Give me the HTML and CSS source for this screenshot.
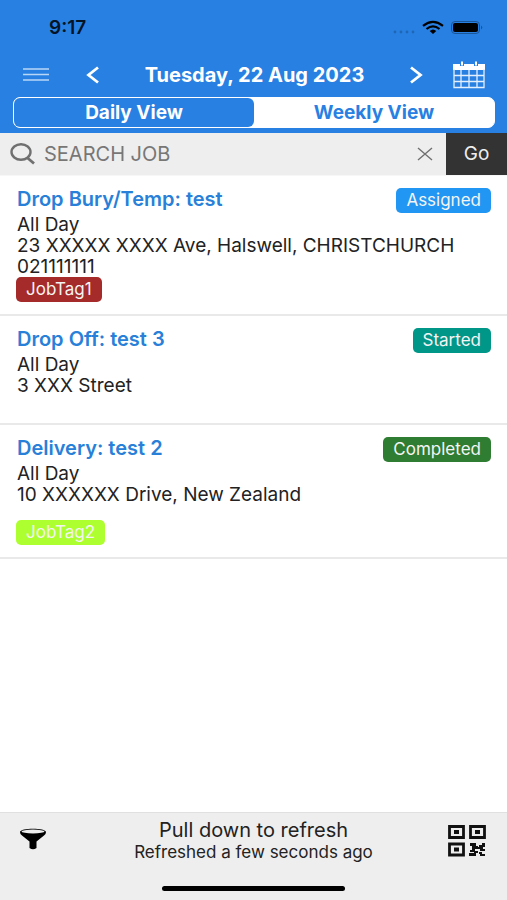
FILE: index.html
```html
<!DOCTYPE html>
<html lang="en">
<head>
<meta charset="utf-8">
<meta name="viewport" content="width=device-width, initial-scale=1">
<title>Jobs</title>
<link rel="stylesheet" href="styles.css">
</head>
<body>
<header class="header">
  <div class="status-bar">
    <span>9:17</span>
    <svg class="status-icons" width="92" height="16" viewBox="0 0 92 16" aria-hidden="true">
      <g fill="#1f66b6"><circle cx="4" cy="12" r="1.400"/><circle cx="10" cy="12" r="1.400"/><circle cx="16" cy="12" r="1.400"/><circle cx="22" cy="12" r="1.400"/></g>
      <g fill="none" stroke="#000" stroke-width="2.200"><path d="M32 5.800Q42-2.200 52 5.800"/><path d="M35.500 9Q42 3.600 48.500 9"/></g>
      <path d="M38.700 11Q42 8 45.300 11L42 14Z"/>
      <rect x="60.500" y="1.500" width="28" height="12" rx="3.500" fill="none" stroke="#1a5598"/>
      <rect x="62" y="3" width="25" height="9" rx="2"/>
      <path d="M90 5.500Q92.500 7.500 90 9.500Z" fill="#1a5598"/>
    </svg>
  </div>
  <nav class="date-bar">
    <button class="icon-button" aria-label="Menu"><svg width="26" height="16" viewBox="0 0 26 16"><path d="M0 2h26M0 7.500h26M0 13h26" stroke="#b9d6f7" stroke-width="1.600"/></svg></button>
    <button class="icon-button previous" aria-label="Previous day"><svg width="14" height="18" viewBox="0 0 14 18"><path d="M12 1.500L2.500 9L12 16.500" fill="none" stroke="#fff" stroke-width="2.800"/></svg></button>
    <h1 class="date">Tuesday, 22 Aug 2023</h1>
    <button class="icon-button next" aria-label="Next day"><svg width="14" height="18" viewBox="0 0 14 18"><path d="M2 1.500L11.500 9L2 16.500" fill="none" stroke="#fff" stroke-width="2.800"/></svg></button>
    <button class="icon-button" aria-label="Calendar"><svg width="32" height="28" viewBox="0 0 32 28"><path d="M0 3h32v6H0z" fill="#fff"/><path d="M1 8v18.500h30V8M8 9v17M16 9v17M24 9v17M1 14.500h30M1 20.500h30" fill="none" stroke="#e4effc" stroke-width="1.300"/><path d="M9 2v3M23 2v3" stroke="#2880e2" stroke-width="4"/><path d="M9 .5v4M23 .5v4" stroke="#fff" stroke-width="2"/></svg></button>
  </nav>
  <div class="tabs">
    <button class="tab selected">Daily View</button>
    <button class="tab">Weekly View</button>
  </div>
</header>
<form class="search">
  <label class="search-label" for="search"><svg width="26" height="22" viewBox="0 0 26 22" aria-hidden="true"><ellipse cx="11" cy="9" rx="9.500" ry="7.800" fill="none" stroke="#707070" stroke-width="2.400"/><path d="M17 14.500L24 20.500" stroke="#707070" stroke-width="2.800"/></svg></label>
  <input class="search-input" id="search" type="text" placeholder="SEARCH JOB" aria-label="Search job">
  <button class="clear" type="reset" aria-label="Clear"><svg width="16" height="14" viewBox="0 0 16 14"><path d="M1 1l14 12M15 1L1 13" stroke="#707070" stroke-width="1.400"/></svg></button>
  <button class="go" type="button">Go</button>
</form>
<main class="jobs">
  <article class="job">
    <div class="job-heading"><h2 class="job-title"><a href="#job1">Drop Bury/Temp: test</a></h2><span class="badge assigned">Assigned</span></div>
    <p>All Day</p>
    <p>23 XXXXX XXXX Ave, Halswell, CHRISTCHURCH</p>
    <p>021111111</p>
    <span class="badge tag-red">JobTag1</span>
  </article>
  <article class="job">
    <div class="job-heading"><h2 class="job-title"><a href="#job2">Drop Off: test 3</a></h2><span class="badge started">Started</span></div>
    <p>All Day</p>
    <p>3 XXX Street</p>
    <p class="blank"></p>
  </article>
  <article class="job">
    <div class="job-heading"><h2 class="job-title"><a href="#job3">Delivery: test 2</a></h2><span class="badge completed">Completed</span></div>
    <p>All Day</p>
    <p>10 XXXXXX Drive, New Zealand</p>
    <p class="blank"></p>
    <span class="badge tag-lime">JobTag2</span>
  </article>
</main>
<footer class="footer">
  <div class="footer-bar">
    <button class="icon-button filter" aria-label="Filter"><svg width="28" height="24" viewBox="0 0 28 24"><path d="M1 5C1 .5 27 .5 27 5Q27 7 25 8.500L17.500 14.500V21Q14 23.500 10.500 21V14.500L3 8.500Q1 7 1 5Z"/><ellipse cx="14" cy="4.500" rx="11.500" ry="1.900" fill="#eee"/></svg></button>
    <div class="refresh"><p>Pull down to refresh</p><p class="refreshed">Refreshed a few seconds ago</p></div>
    <button class="icon-button" aria-label="Scan QR code"><svg width="38" height="32" viewBox="0 0 38 32"><g fill="none" stroke="#111" stroke-width="2.800"><path d="M1.500 1.500h14v11h-14zM22.500 1.500h14v11h-14zM1.500 19h14v11h-14z"/></g><path d="M6 5h5v4H6zM27 5h5v4h-5zM6 22.500h5v4H6zM22 18h6v3h2v3h-3v3h-5v-2h2v-4h-2zM31 20h3v-2h3v4h-2v2h2v2h-5v-2h-2v-2h1zM21 28h5v-2h4v2h-2v3h-7zM31 27h3v2h3v2h-5v-2h-1z" fill="#111"/></svg></button>
  </div>
  <div class="home-indicator"></div>
</footer>
</body>
</html>
```
FILE: styles.css
```css
* { box-sizing: border-box; }
body {
  margin: 0;
  min-height: 100vh;
  display: flex;
  flex-direction: column;
  background: #fff;
  color: #222;
  font: 20px/20px Inter, "Liberation Sans", sans-serif;
}
h1, h2, p { margin: 0; }
button, input { font: inherit; border: 0; padding: 0; background: none; color: inherit; }
svg { display: block; }

.header { background: #2880e2; padding-bottom: 5px; }
.status-bar {
  height: 52px;
  padding: 3px 24px 0 49px;
  display: flex;
  align-items: center;
  justify-content: space-between;
  color: #041426;
  font-size: 19px;
  font-weight: 600;
}
.date-bar {
  height: 45px;
  padding: 0 22px 0 23px;
  display: flex;
  align-items: center;
  color: #fff;
}
.icon-button { flex: none; }
.previous { margin-left: 37px; }
.next { margin-right: 30px; }
.date { flex: 1; text-align: center; font-size: 20px; font-weight: 700; white-space: nowrap; }
.tabs {
  margin: 0 12px 0 13px;
  display: flex;
  height: 31px;
  border: 1px solid #fff;
  border-radius: 7px;
  background: #fff;
}
.tab { flex: 1; border-radius: 6px; color: #2880e2; font-size: 19px; font-weight: 700; }
.tab.selected { background: #2880e2; color: #fff; }

.search { display: flex; align-items: center; height: 43px; background: #eee; border-bottom: 1px solid #f7f7f7; }
.search-label { margin: 0 8px 0 10px; }
.search-input { flex: 1; min-width: 0; outline: 0; }
.search-input::placeholder { color: #777; opacity: 1; }
.clear { margin-right: 13px; }
.go { align-self: stretch; width: 61px; background: #333; color: #eee; font-size: 19px; }

.job { padding: 12px 16px; border-bottom: 2px solid #e9e9e9; }
.job p { padding-left: 1px; font-size: 19px; line-height: 21px; }
.job-heading { display: flex; justify-content: space-between; height: 26px; }
.job-title { padding-left: 1px; font-size: 20px; font-weight: 600; line-height: 22px; }
.job-title a { color: #2880d8; text-decoration: none; }
.job .blank { height: 15px; }
.badge {
  display: block;
  width: fit-content;
  height: 25px;
  padding: 0 10px;
  border-radius: 5px;
  color: #f4f4f4;
  font-size: 17px;
  line-height: 25px;
}
.assigned { background: #2196f3; }
.started { background: #009688; }
.completed { background: #2e7d32; }
.tag-red { background: #a52a2a; }
.tag-lime { background: #adff2f; }

.footer { margin-top: auto; background: #eee; border-top: 1px solid #e0e0e0; padding-bottom: 9px; }
.footer-bar { display: flex; align-items: center; padding: 5px 21px 0 19px; height: 50px; }
.filter { padding-bottom: 4px; }
.refresh { flex: 1; padding-left: 12px; text-align: center; }
.refresh p { line-height: 22px; }
.refresh .refreshed { font-size: 17px; }
.home-indicator { width: 36%; height: 5px; margin: 23px auto 0; border-radius: 3px; background: #000; }
```
